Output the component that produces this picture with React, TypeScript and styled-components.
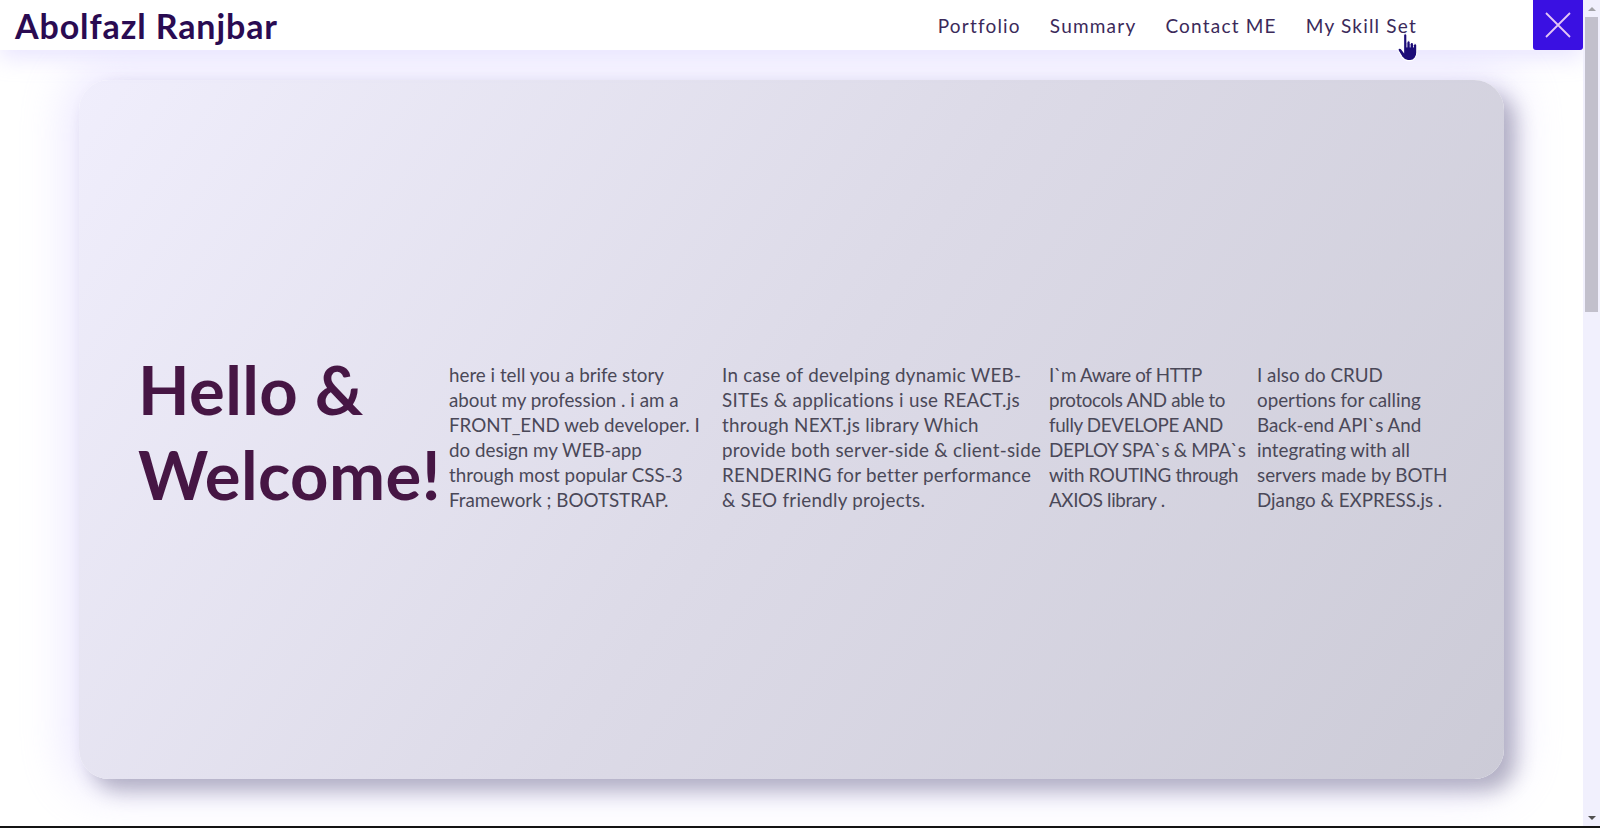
import React from "react";
import styled, { createGlobalStyle } from "styled-components";

const GlobalStyle = createGlobalStyle`
  html, body { margin: 0; padding: 0; background: #ffffff; overflow: hidden; }
  * { box-sizing: border-box; }
`;

const Frame = styled.div`
  display: flex;
  width: 100vw;
  height: 828px;
  border-bottom: 2px solid #141414;
  background: #ffffff;
  font-family: Lato, "Open Sans", sans-serif;
`;

const Main = styled.div`
  flex: 1;
  display: flex;
  flex-direction: column;
  min-width: 0;
  overflow: hidden;
`;

const NavBar = styled.header`
  position: relative;
  z-index: 2;
  height: 50px;
  flex: none;
  display: flex;
  align-items: center;
  justify-content: space-between;
  padding-left: 15px;
  background: #ffffff;
  box-shadow: 0 8px 22px rgba(226, 220, 255, 0.75);
`;

const Brand = styled.div`
  font-size: 34px;
  font-weight: 700;
  color: #2a0b52;
  letter-spacing: 0.9px;
`;

const RightGroup = styled.div`
  display: flex;
  align-items: center;
  height: 100%;
`;

const NavLinks = styled.nav`
  display: flex;
  gap: 29px;
  margin-right: 116px;
  margin-top: 1px;
`;

const NavLink = styled.a`
  font-size: 19px;
  color: #3b2a5a;
  letter-spacing: 1.2px;
  text-decoration: none;
`;

const CloseButton = styled.button`
  width: 50px;
  height: 50px;
  border: none;
  padding: 0;
  background: #3a10e2;
  border-radius: 0 0 3px 3px;
  display: flex;
  align-items: center;
  justify-content: center;
`;

const Cursor = styled.svg`
  position: absolute;
  right: 164px;
  top: 33px;
  z-index: 5;
  pointer-events: none;
`;

const Content = styled.main`
  flex: 1;
  display: flex;
  padding: 30px 79px 47px 79px;
  background: #ffffff;
`;

const Card = styled.section`
  flex: 1;
  border-radius: 30px;
  background: linear-gradient(125deg, #f0eefc 0%, #dcdae7 50%, #cccbd7 100%);
  box-shadow: 12px 12px 20px rgba(45, 40, 75, 0.32), 0 0 46px 14px rgba(214, 206, 255, 0.45);
  display: flex;
  align-items: center;
  padding-left: 59px;
`;

const Hero = styled.h1`
  margin: 4px 0 0 0;
  width: 311px;
  flex: none;
  font-size: 67px;
  line-height: 85px;
  font-weight: 700;
  color: #461644;
  white-space: nowrap;
  letter-spacing: 0.4px;
`;

const Column = styled.p<{ $w?: number; $ls: number }>`
  margin: 17px 0 0 0;
  flex: none;
  width: ${(p) => (p.$w ? `${p.$w}px` : "auto")};
  font-size: 18.8px;
  line-height: 24.9px;
  letter-spacing: ${(p) => p.$ls}px;
  color: #4a4858;
  white-space: nowrap;
`;

const Line = styled.span`
  display: block;
`;

const ScrollTrack = styled.div`
  width: 17px;
  flex: none;
  display: flex;
  flex-direction: column;
  background: #f1f0fd;
`;

const ArrowBox = styled.div`
  height: 17px;
  flex: none;
  display: flex;
  align-items: center;
  justify-content: center;
`;

const Arrow = styled.div<{ $up?: boolean; $color: string }>`
  width: 0;
  height: 0;
  border-left: 4px solid transparent;
  border-right: 4px solid transparent;
  ${(p) =>
    p.$up
      ? `border-bottom: 4px solid ${p.$color};`
      : `border-top: 4px solid ${p.$color};`}
`;

const Thumb = styled.div`
  height: 295px;
  margin: 0 2px 0 2px;
  background: #c2c0cc;
`;

const Spacer = styled.div`
  flex: 1;
`;

const columns: { w?: number; ls: number; lines: string[] }[] = [
  {
    w: 273,
    ls: 0,
    lines: [
      "here i tell you a brife story",
      "about my profession . i am a",
      "FRONT_END web developer. I",
      "do design my WEB-app",
      "through most popular CSS-3",
      "Framework ; BOOTSTRAP.",
    ],
  },
  {
    w: 327,
    ls: 0.28,
    lines: [
      "In case of develping dynamic WEB-",
      "SITEs & applications i use REACT.js",
      "through NEXT.js library Which",
      "provide both server-side & client-side",
      "RENDERING for better performance",
      "& SEO friendly projects.",
    ],
  },
  {
    w: 208,
    ls: -0.35,
    lines: [
      "I`m Aware of HTTP",
      "protocols AND able to",
      "fully DEVELOPE AND",
      "DEPLOY SPA`s & MPA`s",
      "with ROUTING through",
      "AXIOS library .",
    ],
  },
  {
    ls: 0,
    lines: [
      "I also do CRUD",
      "opertions for calling",
      "Back-end API`s And",
      "integrating with all",
      "servers made by BOTH",
      "Django & EXPRESS.js .",
    ],
  },
];

export default function App() {
  return (
    <>
      <GlobalStyle />
      <Frame>
        <Main>
          <NavBar>
            <Brand>Abolfazl Ranjbar</Brand>
            <RightGroup>
              <NavLinks>
                <NavLink href="#">Portfolio</NavLink>
                <NavLink href="#">Summary</NavLink>
                <NavLink href="#">Contact ME</NavLink>
                <NavLink href="#">My Skill Set</NavLink>
              </NavLinks>
              <CloseButton aria-label="close">
                <svg width="26" height="26" viewBox="0 0 26 26">
                  <path d="M1 1 L25 25 M25 1 L1 25" stroke="#e4c6f6" strokeWidth="1.8" fill="none" />
                </svg>
              </CloseButton>
            </RightGroup>
            <Cursor width="22" height="30" viewBox="0 0 20 27">
              <path
                d="M6 2 C6 1.1 6.7 0.5 7.5 0.5 S9 1.1 9 2 V9 V8.3 C9 7.5 9.7 6.9 10.5 6.9 S12 7.5 12 8.3 V9.8 C12 9 12.7 8.4 13.5 8.4 S15 9 15 9.8 V10.8 C15 10 15.7 9.5 16.5 9.5 S18 10.1 18 10.9 V17.5 C18 21.5 15.5 25 12 25 H10 C7.5 25 6 23.5 4.5 21.5 L1.2 16 C0.7 15.2 1 14.2 1.8 13.8 C2.6 13.4 3.5 13.7 4 14.4 L6 17 Z"
                fill="#1c0c78"
                stroke="#ffffff"
                strokeWidth="1"
              />
              <path d="M9 9 V13 M12 10 V13 M15 11 V13" stroke="#ffffff" strokeWidth="0.8" />
            </Cursor>
          </NavBar>
          <Content>
            <Card>
              <Hero>
                Hello &amp;
                <br />
                Welcome!
              </Hero>
              {columns.map((c, i) => (
                <Column key={i} $w={c.w} $ls={c.ls}>
                  {c.lines.map((l, j) => (
                    <Line key={j}>{l}</Line>
                  ))}
                </Column>
              ))}
            </Card>
          </Content>
        </Main>
        <ScrollTrack>
          <ArrowBox>
            <Arrow $up $color="#a3a3a8" />
          </ArrowBox>
          <Thumb />
          <Spacer />
          <ArrowBox>
            <Arrow $color="#505050" />
          </ArrowBox>
        </ScrollTrack>
      </Frame>
    </>
  );
}
